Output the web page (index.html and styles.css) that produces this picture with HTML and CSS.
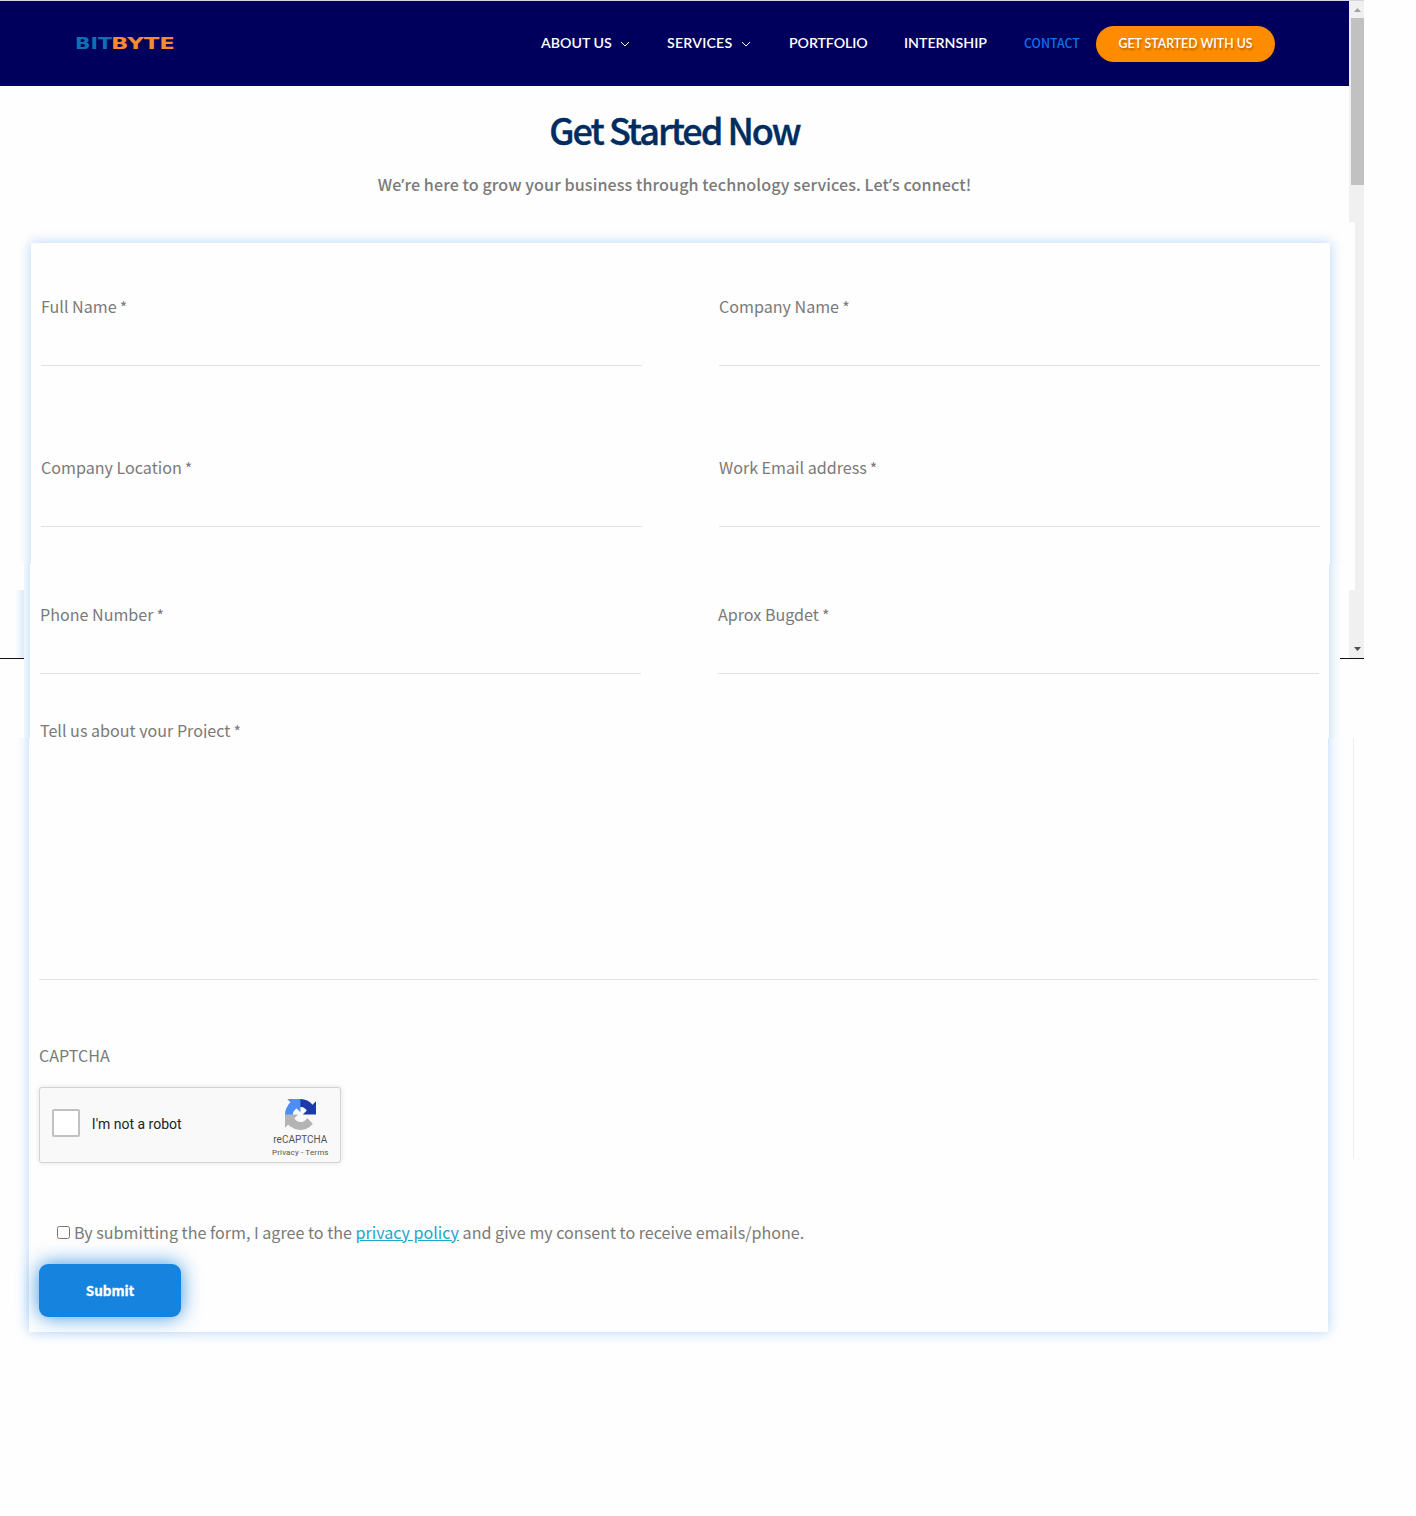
FILE: index.html
```html
<!DOCTYPE html>
<html lang="en">
<head>
<meta charset="utf-8">
<title>BitByte - Get Started Now</title>
<link rel="stylesheet" href="styles.css">
</head>
<body>
<div class="page">
  <div class="content">
    <header class="header">
      <svg class="logo" width="100" height="14" viewBox="0 0 100 14" role="img" aria-label="BitByte">
        <text x="-1" y="12" textLength="37" lengthAdjust="spacingAndGlyphs" fill="#0a72b4">BIT</text>
        <text x="35" y="12" textLength="64" lengthAdjust="spacingAndGlyphs" fill="#f58a33">BYTE</text>
      </svg>
      <nav class="nav">
        <a class="nav-about">ABOUT US <svg class="chev" viewBox="0 0 10 6"><path d="M1 1l4 4 4-4"/></svg></a>
        <a class="nav-services">SERVICES <svg class="chev" viewBox="0 0 10 6"><path d="M1 1l4 4 4-4"/></svg></a>
        <a class="nav-portfolio">PORTFOLIO</a>
        <a class="nav-internship">INTERNSHIP</a>
        <a class="nav-contact">CONTACT</a>
        <a class="cta"><span>GET STARTED WITH US</span></a>
      </nav>
    </header>

    <main>
      <h1 class="title"><span>Get Started Now</span></h1>
      <p class="subtitle">We<span class="apos">’</span>re here to grow your business through technology services. Let<span class="apos">’</span>s connect!</p>

      <form class="form">
        <section class="panel panel-top">
          <div class="row">
            <label class="field"><span>Full Name <i>*</i></span><input type="text"></label>
            <label class="field"><span>Company Name <i>*</i></span><input type="text"></label>
          </div>
          <div class="row">
            <label class="field"><span>Company Location <i>*</i></span><input type="text"></label>
            <label class="field"><span>Work Email address <i>*</i></span><input type="text"></label>
          </div>
        </section>
        <section class="panel panel-middle">
          <div class="row">
            <label class="field"><span>Phone Number <i>*</i></span><input type="text"></label>
            <label class="field"><span>Aprox Bugdet <i>*</i></span><input type="text"></label>
          </div>
          <label class="project" for="project"><span>Tell us about your Project <i>*</i></span></label>
        </section>
        <section class="panel panel-bottom">
          <textarea id="project"></textarea>
          <div class="captcha-label"><span>CAPTCHA</span></div>
          <div class="captcha">
            <span class="captcha-box"></span>
            <span class="captcha-text">I'm not a robot</span>
            <div class="captcha-brand">
              <svg width="31" height="31" viewBox="0 0 64 64">
                <path fill="#1c3aa9" d="M64 31.955l-.033-1.370V4.687l-7.160 7.160C50.948 4.674 42.033.093 32.050.093c-10.400 0-19.622 4.960-25.458 12.640l11.736 11.860a15.550 15.550 0 0 1 4.754-5.334c2.050-1.600 4.952-2.906 8.968-2.906.485 0 .860.057 1.135.163 4.976.393 9.288 3.140 11.828 7.124l-8.307 8.307L64 31.953"/>
                <path fill="#4b8ff5" d="M31.862.094l-1.370.033H4.594l7.160 7.160C4.580 13.147 0 22.060 0 32.046c0 10.400 4.960 19.622 12.640 25.458L24.500 45.768a15.550 15.550 0 0 1-5.334-4.754c-1.600-2.050-2.906-4.952-2.906-8.968 0-.485.057-.860.163-1.135.393-4.976 3.140-9.288 7.124-11.828l8.307 8.307L31.860.095"/>
                <path fill="#b4b4b4" d="M.001 32.045l.033 1.370v25.898l7.160-7.160c5.860 7.173 14.774 11.754 24.760 11.754 10.400 0 19.622-4.960 25.458-12.640l-11.736-11.860a15.550 15.550 0 0 1-4.754 5.334c-2.050 1.600-4.952 2.906-8.968 2.906-.485 0-.860-.057-1.135-.163-4.976-.393-9.288-3.140-11.828-7.124l8.307-8.307c-10.522.040-22.400.066-27.295-.005"/>
              </svg>
              <span class="brand-name">reCAPTCHA</span>
              <span class="brand-links">Privacy - Terms</span>
            </div>
          </div>
          <div class="consent"><input type="checkbox"><span>By submitting the form, I agree to the <a>privacy policy</a> and give my consent to receive emails/phone.</span></div>
          <button class="submit" type="button"><span>Submit</span></button>
        </section>
      </form>
    </main>
  </div>
  <aside class="scrollbar">
    <div class="bar-top"><i class="arrow-up"></i><div class="thumb"></div></div>
    <div class="bar-middle"></div>
    <div class="bar-bottom"><i class="arrow-down"></i></div>
  </aside>
  <i class="edge edge-left"></i>
  <i class="edge edge-right"></i>
  <i class="glow"></i>
  <i class="divider"></i>
</div>
</body>
</html>
```
FILE: styles.css
```css
* { box-sizing: border-box; }
body {
  margin: 0;
  background: #fefefe;
  color: #7a7a7a;
  font-family: "Noto Sans CJK SC", "Noto Sans", sans-serif;
  font-size: 16.100px;
}
.page {
  position: relative;
  display: flex;
  width: 1364px;
  height: 1515px;
  border-top: 1px solid #d5d7e0;
}
.content { width: 1349px; }

.header {
  display: flex;
  align-items: center;
  height: 85px;
  padding-left: 76px;
  background: #00005c;
}
.logo { display: block; overflow: visible; font: bold 16px "DejaVu Sans", sans-serif; }
.nav {
  display: flex;
  align-items: center;
  margin-left: 365px;
  padding-bottom: 1px;
  color: #fff;
  font: 600 14.200px/20px Lato, sans-serif;
  white-space: nowrap;
}
.nav a { margin-top: 0; }
.nav-about { width: 126px; }
.nav-services { width: 122px; letter-spacing: .2px; }
.nav-portfolio { width: 115px; letter-spacing: -.1px; }
.nav-internship { width: 120px; }
.nav .nav-contact {
  width: 72px;
  margin-top: -1px;
  color: #0d72ea;
  font: 500 12.400px/20px "Noto Sans CJK SC", sans-serif;
}
.chev {
  width: 10px;
  height: 6px;
  margin-left: 5px;
  vertical-align: 1px;
  fill: none;
  stroke: #fff;
  stroke-width: 1;
}
.nav .cta {
  width: 179px;
  height: 36px;
  margin-top: 1px;
  border-radius: 18px;
  background: #ff8c00;
  text-align: center;
  font-size: 12.300px;
  line-height: 36px;
  text-shadow: 1px 2px 2px rgba(0, 0, 0, .3);
}

.title {
  height: 54px;
  margin: 16px 0 0;
  color: #002c5f;
  text-align: center;
  font-size: 36px;
  font-weight: 500;
  line-height: 54px;
  letter-spacing: -2px;
  -webkit-text-stroke: .4px #002c5f;
}
.subtitle {
  height: 26px;
  margin: 15px 0 0;
  text-align: center;
  font-weight: 500;
  line-height: 26px;
  letter-spacing: .09px;
}
.apos { font-family: "Noto Sans", sans-serif; line-height: 1; }

.form { margin-top: 46px; }
.panel {
  position: relative;
  width: 1299px;
  padding: 0 10px;
}
.panel::before {
  content: "";
  position: absolute;
  z-index: -1;
  inset: -40px 0;
  background: #fefefe;
  box-shadow: 0 0 12px rgba(22, 125, 230, .33);
}
.panel-top {
  height: 321px;
  margin-left: 31px;
  padding-top: 50px;
  clip-path: inset(-30px -25px 0 -30px);
}
.panel-top::before { top: 0; }
.panel-middle {
  height: 174px;
  margin-left: 30px;
  padding-top: 37px;
  clip-path: inset(0 -25px 0 -6px);
}
.panel-bottom {
  height: 594px;
  margin-left: 29px;
  clip-path: inset(0 -25px -30px -29px);
}
.panel-bottom::before { bottom: 0; }
.row { display: flex; gap: 77px; }
.row + .row { margin-top: 88px; }
.field { width: 601px; }
.field span, .project span { display: block; height: 26px; line-height: 26px; }
.field i, .project i { font-style: normal; line-height: 0; margin-left: -.5px; vertical-align: -1px; }
.field input {
  display: block;
  width: 100%;
  height: 47px;
  border: 0;
  border-bottom: 1px solid #e1e1e1;
  background: transparent;
}
.project { display: block; margin-top: 43px; }
textarea {
  display: block;
  width: 1279px;
  height: 242px;
  border: 0;
  border-bottom: 1px solid #e1e1e1;
  background: transparent;
  resize: none;
}
.captcha-label { height: 26px; margin-top: 62px; line-height: 26px; }
.captcha {
  display: flex;
  align-items: center;
  width: 302px;
  height: 76px;
  margin-top: 19px;
  padding-left: 12px;
  border: 1px solid #d3d3d3;
  border-radius: 3px;
  background: #f9f9f9;
  box-shadow: 0 0 4px 1px rgba(0, 0, 0, .08);
  font-family: Roboto, sans-serif;
}
.captcha-box {
  width: 28px;
  height: 28px;
  margin-top: -4px;
  border: 2px solid #c1c1c1;
  border-radius: 2px;
  background: #fff;
}
.captcha-text {
  width: 170px;
  margin: -3px 0 0 12px;
  color: #222;
  font-size: 14px;
  line-height: 20px;
}
.captcha-brand {
  display: flex;
  flex-direction: column;
  align-items: center;
  width: 80px;
  margin-top: 7px;
  color: #555;
}
.brand-name { margin-top: 4px; font-size: 10px; line-height: 12px; }
.brand-links { margin-top: 1px; font-size: 8px; line-height: 12px; letter-spacing: .15px; }
.consent {
  display: flex;
  height: 26px;
  margin-top: 56px;
  padding-left: 18px;
  line-height: 26px;
  white-space: nowrap;
}
.consent input { width: 13px; height: 13px; margin: 7px 4px 0 0; }
.consent a { color: #1fa6cc; text-decoration: underline; }
.submit {
  display: block;
  width: 142px;
  height: 53px;
  margin-top: 19px;
  padding: 0;
  border: 0;
  border-radius: 9px;
  background: #1683df;
  box-shadow: 0 0 20px rgba(22, 131, 223, .85);
  color: #fff;
  font: 700 13.500px/53px "Noto Sans CJK SC", sans-serif;
  -webkit-text-stroke: .3px #fff;
}
.submit span { display: block; height: 53px; }

.scrollbar {
  display: flex;
  flex-direction: column;
  align-items: flex-end;
  width: 15px;
  height: 657px;
}
.bar-top, .bar-bottom { width: 15px; background: #f0f0f0; }
.bar-top { height: 221px; padding-top: 7px; }
.arrow-up, .arrow-down {
  display: block;
  margin-left: 5px;
  width: 7px;
  height: 4px;
  background: #a2a2a2;
  clip-path: polygon(50% 0, 100% 100%, 0 100%);
}
.thumb { height: 167px; margin: 6px 0 0 2px; background: #c1c1c1; }
.bar-middle { width: 9px; height: 368px; background: #f0f0f0; }
.bar-bottom { height: 68px; padding-top: 57px; }
.arrow-down { background: #505050; clip-path: polygon(0 0, 100% 0, 50% 100%); }

.edge { position: absolute; top: 657px; width: 24px; height: 1px; background: #111; }
.edge-left { left: 0; }
.edge-right { left: 1340px; }
.glow {
  position: absolute;
  top: 589px;
  left: 15px;
  width: 9px;
  height: 68px;
  background: linear-gradient(to right, transparent, rgba(22, 125, 230, .15));
}
.divider { position: absolute; top: 737px; left: 1353px; width: 1px; height: 421px; background: #eee; }
```
